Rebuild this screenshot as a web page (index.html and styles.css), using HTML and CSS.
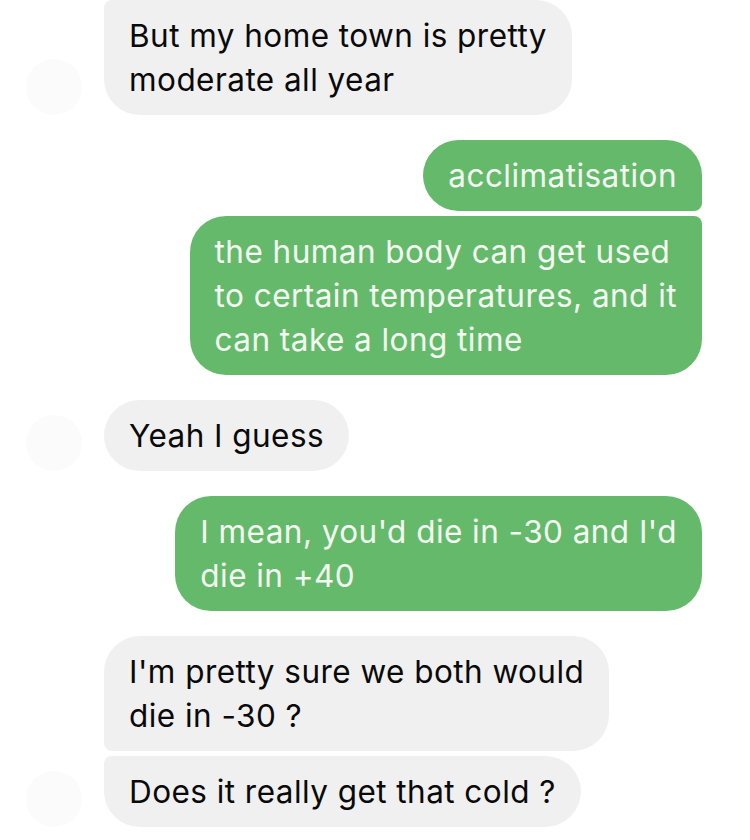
FILE: index.html
```html
<!DOCTYPE html>
<html>
<head>
<meta charset="utf-8">
<link rel="stylesheet" href="styles.css">
</head>
<body>
<div class="chat">
  <div class="group in">
    <div class="row"><div class="avatar"></div><div class="bubble gray last">But my home town is pretty<br>moderate all year</div></div>
  </div>
  <div class="group out">
    <div class="row"><div class="bubble green first">acclimatisation</div></div>
    <div class="row"><div class="bubble green last">the human body can get used<br>to certain temperatures, and it<br>can take a long time</div></div>
  </div>
  <div class="group in">
    <div class="row"><div class="avatar"></div><div class="bubble gray">Yeah I guess</div></div>
  </div>
  <div class="group out">
    <div class="row"><div class="bubble green">I mean, you'd die in -30 and I'd<br>die in +40</div></div>
  </div>
  <div class="group in">
    <div class="row"><div class="avatar hidden"></div><div class="bubble gray first">I'm pretty sure we both would<br>die in -30 ?</div></div>
    <div class="row"><div class="avatar"></div><div class="bubble gray last">Does it really get that cold ?</div></div>
  </div>
</div>
</body>
</html>
```
FILE: styles.css
```css
html, body {
  margin: 0;
  padding: 0;
  background: #ffffff;
}
.chat {
  width: 750px;
  display: flex;
  flex-direction: column;
  gap: 25px;
  font-family: Inter, "Liberation Sans", Arial, sans-serif;
  font-size: 31.5px;
  letter-spacing: 0.45px;
  line-height: 44px;
}
.group {
  display: flex;
  flex-direction: column;
  gap: 5px;
}
.row {
  display: flex;
  align-items: flex-end;
}
.out .row {
  justify-content: flex-end;
  padding-right: 48px;
}
.avatar {
  width: 56px;
  height: 56px;
  border-radius: 50%;
  background: #fbfbfb;
  margin-left: 26px;
  margin-right: 22px;
  flex: none;
}
.avatar.hidden {
  visibility: hidden;
}
.bubble {
  padding: 13.5px 25px;
  border-radius: 36px;
  white-space: nowrap;
}
.gray {
  background: #f0f0f0;
  color: #0a0a0a;
}
.green {
  background: #65b96a;
  color: #f4fbf2;
}
.in .bubble.first { border-bottom-left-radius: 8px; }
.in .bubble.last { border-top-left-radius: 8px; }
.out .bubble.first { border-bottom-right-radius: 8px; }
.out .bubble.last { border-top-right-radius: 8px; }
```
